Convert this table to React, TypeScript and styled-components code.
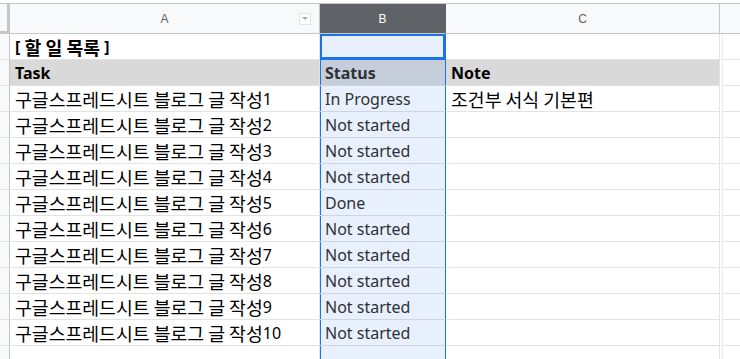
import React from 'react';
import styled, { createGlobalStyle, css } from 'styled-components';

const GlobalStyle = createGlobalStyle`
  html, body {
    margin: 0;
    padding: 0;
    background: #ffffff;
    overflow: hidden;
  }
`;

const HEADER_LINE = '#c4c7c5';
const GRID_LINE = '#e2e3e3';
const SEL_BLUE = '#1a73e8';

const Sheet = styled.div`
  margin-top: 3px;
  border-top: 1px solid ${HEADER_LINE};
  display: grid;
  grid-template-columns: 10px 310px 126px 274px 1fr;
  grid-auto-rows: 26px;
  grid-template-rows: 30px;
  width: 740px;
`;

const Corner = styled.div`
  box-sizing: border-box;
  background: #f8f9fa;
  border-right: 3px solid ${HEADER_LINE};
  border-bottom: 3px solid ${HEADER_LINE};
`;

const ColHeader = styled.div<{ $active?: boolean }>`
  box-sizing: border-box;
  display: grid;
  grid-template-columns: 1fr auto 1fr;
  align-items: center;
  font-family: 'Liberation Sans', Arial, sans-serif;
  font-size: 12px;
  color: #5f6368;
  background: #f8f9fa;
  border-right: 1px solid ${HEADER_LINE};
  border-bottom: 1px solid ${HEADER_LINE};

  ${p =>
    p.$active &&
    css`
      background: #5f6368;
      color: #ffffff;
      border-right-color: #5f6368;
    `}

  span {
    grid-column: 2;
  }
`;

const FilterButton = styled.div`
  grid-column: 3;
  justify-self: end;
  margin-right: 8px;
  width: 12px;
  height: 12px;
  box-sizing: border-box;
  border: 1px solid #e3e4e6;
  background: #ffffff;
  display: flex;
  align-items: center;
  justify-content: center;

  &::after {
    content: '';
    width: 0;
    height: 0;
    border-left: 3px solid transparent;
    border-right: 3px solid transparent;
    border-top: 3px solid #a6a9ad;
  }
`;

const RowHeader = styled.div`
  box-sizing: border-box;
  background: #f8f9fa;
  border-right: 1px solid ${HEADER_LINE};
  border-bottom: 1px solid ${GRID_LINE};
`;

const Cell = styled.div<{ $bold?: boolean; $band?: boolean; $sel?: boolean; $active?: boolean }>`
  box-sizing: border-box;
  display: flex;
  align-items: center;
  padding: 1px 5px 0 5px;
  white-space: pre;
  overflow: hidden;
  font-family: 'Noto Sans', 'Noto Sans CJK KR', sans-serif;
  font-size: 16px;
  font-weight: ${p => (p.$bold ? 700 : 400)};
  color: ${p => (p.$sel ? '#303134' : '#000000')};
  background: ${p => (p.$band ? '#d9d9d9' : '#ffffff')};
  border-right: 1px solid ${GRID_LINE};
  border-bottom: 1px solid ${GRID_LINE};

  ${p =>
    p.$sel &&
    css`
      background: ${p.$band ? '#c5cddb' : '#e8f0fe'};
      border-bottom-color: #cdd5e3;
      border-right-color: ${SEL_BLUE};
      box-shadow: inset 1px 0 0 ${SEL_BLUE};
    `}

  ${p =>
    p.$active &&
    css`
      box-shadow: inset 0 0 0 2px ${SEL_BLUE};
      border-bottom-color: ${SEL_BLUE};
    `}
`;

// Hangul glyphs in the original font run larger than the Latin ones
const Hangul = styled.span`
  font-family: 'Noto Sans CJK KR', sans-serif;
  font-size: 18.3px;
  line-height: 1;
`;

const Spare = styled.div`
  box-sizing: border-box;
  border-bottom: 1px solid ${GRID_LINE};
  border-left: 1px solid #ececec;
  margin-left: 2px;
`;

const SpareHeader = styled.div`
  background: #f8f9fa;
  border-bottom: 1px solid ${HEADER_LINE};
`;

const CellText = ({ text }: { text: string }) => {
  const parts = text.split(/([\uAC00-\uD7A3]+(?: [\uAC00-\uD7A3]+)*)/);
  return (
    <>
      {parts.map((p, i) =>
        /[\uAC00-\uD7A3]/.test(p) ? <Hangul key={i}>{p}</Hangul> : <React.Fragment key={i}>{p}</React.Fragment>
      )}
    </>
  );
};

type Row = { a: string; b: string; c: string; bold?: boolean; band?: boolean };

const rows: Row[] = [
  { a: '[ 할 일 목록 ]', b: '', c: '', bold: true },
  { a: 'Task', b: 'Status', c: 'Note', bold: true, band: true },
  { a: '구글스프레드시트 블로그 글 작성1', b: 'In Progress', c: '조건부 서식 기본편' },
  { a: '구글스프레드시트 블로그 글 작성2', b: 'Not started', c: '' },
  { a: '구글스프레드시트 블로그 글 작성3', b: 'Not started', c: '' },
  { a: '구글스프레드시트 블로그 글 작성4', b: 'Not started', c: '' },
  { a: '구글스프레드시트 블로그 글 작성5', b: 'Done', c: '' },
  { a: '구글스프레드시트 블로그 글 작성6', b: 'Not started', c: '' },
  { a: '구글스프레드시트 블로그 글 작성7', b: 'Not started', c: '' },
  { a: '구글스프레드시트 블로그 글 작성8', b: 'Not started', c: '' },
  { a: '구글스프레드시트 블로그 글 작성9', b: 'Not started', c: '' },
  { a: '구글스프레드시트 블로그 글 작성10', b: 'Not started', c: '' },
  { a: '', b: '', c: '' },
];

export default function App() {
  return (
    <>
      <GlobalStyle />
      <Sheet>
        <Corner />
        <ColHeader>
          <span>A</span>
          <FilterButton />
        </ColHeader>
        <ColHeader $active>
          <span>B</span>
        </ColHeader>
        <ColHeader>
          <span>C</span>
        </ColHeader>
        <SpareHeader />

        {rows.map((r, i) => (
          <React.Fragment key={i}>
            <RowHeader />
            <Cell $bold={r.bold} $band={r.band}>
              <CellText text={r.a} />
            </Cell>
            <Cell $bold={r.bold} $band={r.band} $sel $active={i === 0}>
              {r.b}
            </Cell>
            <Cell $bold={r.bold} $band={r.band}>
              <CellText text={r.c} />
            </Cell>
            <Spare />
          </React.Fragment>
        ))}
      </Sheet>
    </>
  );
}
